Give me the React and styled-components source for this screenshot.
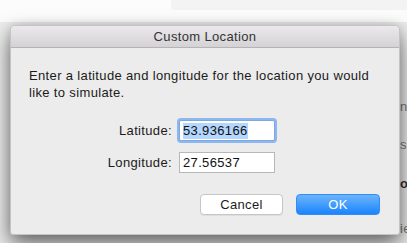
import React from "react";
import styled, { createGlobalStyle } from "styled-components";

const Global = createGlobalStyle`
  html, body { margin: 0; padding: 0; }
  body {
    width: 407px; height: 243px; overflow: hidden;
    background: #fcfcfc;
    font-family: "Liberation Sans", "Helvetica Neue", Arial, sans-serif;
    letter-spacing: 0.35px;
    -webkit-font-smoothing: antialiased;
  }
`;

const Desktop = styled.div`
  position: relative;
  width: 407px;
  height: 243px;
  overflow: hidden;
  background: #fcfcfc;
`;

const TopPanel = styled.div`
  margin-left: 171px;
  height: 10px;
  background: #f3f3f3;
  border-bottom-left-radius: 4px;
`;

const BackWindow = styled.div`
  margin-top: 12px;
  height: 230px;
  display: flex;
  justify-content: flex-end;
  background: #ececec;
`;

const ClipColumn = styled.div`
  width: 7px;
  overflow: hidden;
  padding-top: 77px;
  display: flex;
  flex-direction: column;
  font-size: 13px;
  line-height: 15px;
`;

const BackLine = styled.div`
  height: ${(p) => p.$h}px;
  flex: none;
  white-space: nowrap;
  font-weight: ${(p) => (p.$bold ? 700 : 400)};
  color: ${(p) => (p.$bold ? "#333" : "#777")};
`;

const Dialog = styled.div`
  position: absolute;
  left: 10px;
  top: 25px;
  width: 388px;
  height: 208px;
  border: 1px solid #c4c4c4;
  border-radius: 5px 5px 3px 3px;
  background: #ececec;
  box-shadow: 0 10px 22px rgba(0, 0, 0, 0.55), 0 0 10px rgba(0, 0, 0, 0.12);
  display: flex;
  flex-direction: column;
  overflow: hidden;
`;

const TitleBar = styled.div`
  height: 21px;
  flex: none;
  background: linear-gradient(#ebe9eb, #d4d2d4);
  border-bottom: 1px solid #b4b4b4;
  display: flex;
  align-items: center;
  justify-content: center;
  font-size: 13px;
  color: #333;
`;

const Body = styled.div`
  flex: 1;
  padding: 19px 19px 19px 18px;
  display: flex;
  flex-direction: column;
`;

const Message = styled.p`
  margin: 0;
  max-width: 345px;
  font-size: 13px;
  line-height: 17px;
  color: #1b1b1b;
`;

const Form = styled.div`
  margin-top: 19px;
  display: grid;
  grid-template-columns: 143px 96px;
  column-gap: 7px;
  row-gap: 11px;
  align-items: center;
  justify-content: start;
`;

const Label = styled.label`
  text-align: right;
  font-size: 13px;
  color: #1b1b1b;
`;

const Field = styled.div`
  box-sizing: border-box;
  height: 21px;
  width: 96px;
  background: #fff;
  border: 1px solid ${(p) => (p.$focused ? "#7fa8e0" : "#b8b8b8")};
  box-shadow: ${(p) =>
    p.$focused ? "0 0 0 2px rgba(110, 165, 240, 0.75)" : "none"};
  border-radius: ${(p) => (p.$focused ? "2px" : "0")};
  padding: 0 3px;
  display: flex;
  align-items: center;
  font-size: 13px;
  color: #111;
`;

const Selected = styled.span`
  background: #b3d7ff;
  line-height: 16px;
`;

const Buttons = styled.div`
  margin-top: auto;
  display: flex;
  justify-content: flex-end;
  gap: 13px;
`;

const Button = styled.button`
  box-sizing: border-box;
  width: ${(p) => p.$w}px;
  height: 21px;
  border-radius: 4px;
  font-family: inherit;
  letter-spacing: inherit;
  font-size: 13px;
  padding: 0;
  border: 1px solid ${(p) => (p.$primary ? "#2f8df9" : "#c6c6c6")};
  color: ${(p) => (p.$primary ? "#fff" : "#1b1b1b")};
  background: ${(p) =>
    p.$primary ? "linear-gradient(#6cb4fb, #1a85fc)" : "#fff"};
  box-shadow: ${(p) => (p.$primary ? "none" : "0 1px 0 rgba(0,0,0,0.06)")};
`;

export default function App() {
  return (
    <Desktop>
      <Global />
      <TopPanel />
      <BackWindow>
        <ClipColumn>
          <BackLine $h={38}>n</BackLine>
          <BackLine $h={39}>s</BackLine>
          <BackLine $h={45} $bold>o</BackLine>
          <BackLine $h={15}>ie</BackLine>
        </ClipColumn>
      </BackWindow>
      <Dialog>
        <TitleBar>Custom Location</TitleBar>
        <Body>
          <Message>
            Enter a latitude and longitude for the location you would like to
            simulate.
          </Message>
          <Form>
            <Label>Latitude:</Label>
            <Field $focused>
              <Selected>53.936166</Selected>
            </Field>
            <Label>Longitude:</Label>
            <Field>27.56537</Field>
          </Form>
          <Buttons>
            <Button $w={83}>Cancel</Button>
            <Button $w={84} $primary>
              OK
            </Button>
          </Buttons>
        </Body>
      </Dialog>
    </Desktop>
  );
}
